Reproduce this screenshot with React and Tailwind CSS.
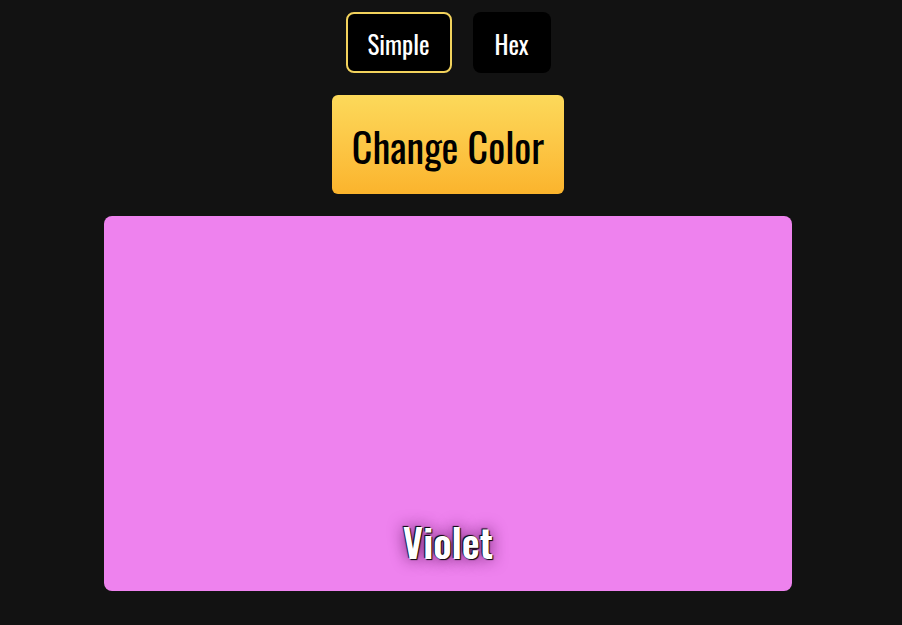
import { useState } from 'react';

const font = "[font-family:'Oswald','Liberation_Sans_Narrow','DejaVu_Sans_Condensed',sans-serif]";

export default function App() {
  const [mode, setMode] = useState('simple');

  return (
    <div className={`min-h-screen w-full bg-[#121212] flex flex-col items-center pt-3 pr-[6px] ${font}`}>
      {/* Selector de modo */}
      <div className="flex gap-[21px]">
        <button
          onClick={() => setMode('simple')}
          className={`h-[61px] w-[106px] rounded-lg bg-black text-white text-[25px] pt-[2px] ${
            mode === 'simple' ? 'border-2 border-[#f2d25c]' : 'border-2 border-transparent'
          }`}
        >
          Simple
        </button>
        <button
          onClick={() => setMode('hex')}
          className={`h-[61px] w-[78px] rounded-lg bg-black text-white text-[25px] pt-[2px] ${
            mode === 'hex' ? 'border-2 border-[#f2d25c]' : 'border-2 border-transparent'
          }`}
        >
          Hex
        </button>
      </div>

      <button className="mt-[22px] h-[99px] w-[232px] rounded-md bg-gradient-to-b from-[#fcd95a] to-[#fbb42c] text-black text-[40px] pt-[3px]">
        Change Color
      </button>

      {/* Caja de color */}
      <div className="mt-[22px] h-[375px] w-[688px] rounded-lg bg-[#ee82ee] flex items-end justify-center pb-[21px]">
        <span className="text-white text-[39px] font-semibold [text-shadow:1px_1px_1px_#000,-1px_-1px_1px_#000,0_0_16px_#5a105a]">
          Violet
        </span>
      </div>
    </div>
  );
}
